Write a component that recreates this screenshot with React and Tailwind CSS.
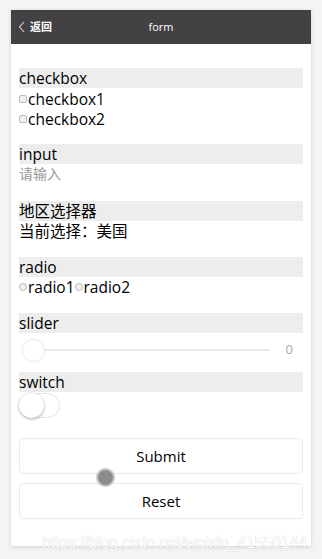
const font = { fontFamily: '"Open Sans", "Noto Sans CJK SC", sans-serif' };

const SectionTitle = ({ children }) => (
	<div className="h-[20px] bg-[#ededed] text-[15.5px] leading-[20px] text-black">
		{children}
	</div>
);

const Check = ({ label }) => (
	<div className="flex items-center h-[20px] text-[15.5px] leading-[20px] text-black">
		<span className="w-[8px] h-[8px] mr-[1px] border border-[#bbb] bg-[#f0f0f0] rounded-[2px]" />
		{label}
	</div>
);

const Radio = ({ label }) => (
	<span className="flex items-center">
		<span className="w-[8px] h-[8px] mr-[1px] border border-[#bbb] bg-[#f0f0f0] rounded-full" />
		{label}
	</span>
);

export default function App() {
	return (
		<div
			className="relative w-[322px] h-[559px] bg-[#f4f4f4] pt-[10px] pl-[11px]"
			style={font}
		>
			<div className="w-[300px] h-[536px] bg-white shadow-[0_1px_4px_rgba(0,0,0,0.15)]">
				{/* header */}
				<div className="relative h-[34px] bg-[#434143] flex items-center justify-center">
					<div className="absolute left-[7px] top-0 h-full flex items-center text-white">
						<svg width="8" height="12" viewBox="0 0 8 12" fill="none">
							<path d="M6 1 L1.5 6 L6 11" stroke="#ddd" strokeWidth="1.1" />
						</svg>
						<span className="ml-[4px] text-[11px] font-bold">返回</span>
					</div>
					<span className="text-[11px] text-white">form</span>
				</div>

				<div className="px-[8px] pt-[24px]">
					<SectionTitle>checkbox</SectionTitle>
					<div className="pt-[1px]">
						<Check label="checkbox1" />
						<Check label="checkbox2" />
					</div>

					<div className="mt-[15px]">
						<SectionTitle>input</SectionTitle>
						<div className="h-[20px] text-[14px] leading-[20px] text-[#999]">请输入</div>
					</div>

					<div className="mt-[17px]">
						<SectionTitle>地区选择器</SectionTitle>
						<div className="h-[20px] text-[15.5px] leading-[20px] text-black">当前选择：美国</div>
					</div>

					<div className="mt-[16px]">
						<SectionTitle>radio</SectionTitle>
						<div className="flex h-[20px] text-[15.5px] leading-[20px] text-black">
							<Radio label="radio1" />
							<Radio label="radio2" />
						</div>
					</div>

					<div className="mt-[16px]">
						<SectionTitle>slider</SectionTitle>
						<div className="flex items-center h-[31px] pl-[3px] pt-[3px]">
							<span className="w-[23px] h-[23px] rounded-full bg-white border border-[#eee] shadow-[0_0_2px_rgba(0,0,0,0.08)]" />
							<span className="flex-1 h-[2px] bg-[#eaeaea]" />
							<span className="w-[33px] text-right pr-[10px] text-[13px] text-[#aaa]">0</span>
						</div>
					</div>

					<div className="mt-[8px]">
						<SectionTitle>switch</SectionTitle>
						<div className="pt-[1px]">
							<div className="relative w-[41px] h-[25px] rounded-full border border-[#e5e5e5] bg-white">
								<span className="absolute left-[-1px] top-[-1px] w-[25px] h-[25px] rounded-full bg-white shadow-[0_1px_3px_rgba(0,0,0,0.35)]" />
							</div>
						</div>
					</div>

					<div className="mt-[20px] h-[36px] border border-[#ebebeb] rounded-[4px] flex items-center justify-center text-[15px] text-black">
						Submit
					</div>
					<div className="mt-[9px] h-[36px] border border-[#ebebeb] rounded-[4px] flex items-center justify-center text-[15px] text-black">
						Reset
					</div>
				</div>
			</div>

			{/* touch cursor */}
			<span className="absolute left-[96px] top-[468px] w-[19px] h-[19px] rounded-full bg-[#8c8c8c] border-2 border-[#c8c8c8]" />

			{/* watermark */}
			<span
				className="absolute left-[42px] top-[531px] text-[16px] text-white tracking-[-0.2px] [text-shadow:0_0_1px_rgba(0,0,0,0.25)]"
				style={{ fontFamily: '"Liberation Sans", Arial, sans-serif' }}
			>
				https://blog.csdn.net/weixin_41550144
			</span>
		</div>
	);
}
